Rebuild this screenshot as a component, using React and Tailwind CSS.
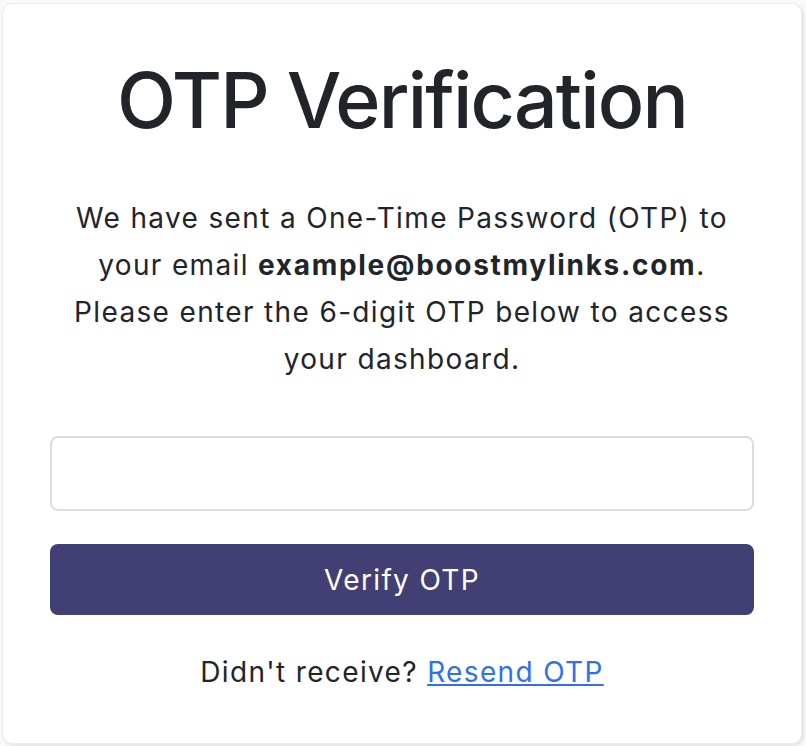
export default function App() {
  return (
    <div className="w-[806px] h-[746px] bg-[#fafafa] pl-[2px] pt-[3px] overflow-hidden font-['Inter',sans-serif] text-[#212529]">
      <div className="w-[800px] h-[741px] bg-white rounded-[10px] border border-[#ececec] shadow-[2px_2px_4px_rgba(0,0,0,0.10)] px-[47px] pt-[50px] flex flex-col items-center">
        <h1 className="text-[77px] leading-[92px] font-medium tracking-[-1.8px] text-center">OTP Verification</h1>
        <p className="mt-[49px] text-[28px] leading-[47px] tracking-[1.35px] text-center w-full">
          We have sent a One-Time Password (OTP) to
          <br />
          your email <strong className="font-bold tracking-[1.7px]">example@boostmylinks.com</strong>.
          <br />
          Please enter the 6-digit OTP below to access
          <br />
          your dashboard.
        </p>
        <input
          type="text"
          className="mt-[53px] w-full h-[75px] shrink-0 rounded-[8px] border-2 border-[#dadee3] bg-white px-4 text-[28px] outline-none"
        />
        <button className="mt-[33px] w-full h-[71px] shrink-0 rounded-[8px] bg-[#423f74] text-white text-[28px] tracking-[1.35px]">
          Verify OTP
        </button>
        <p className="mt-[34px] text-[28px] leading-[47px] tracking-[1.35px] text-center">
          Didn't receive?{" "}
          <a href="#" className="text-[#2f6ff0] underline">
            Resend OTP
          </a>
        </p>
      </div>
    </div>
  );
}
